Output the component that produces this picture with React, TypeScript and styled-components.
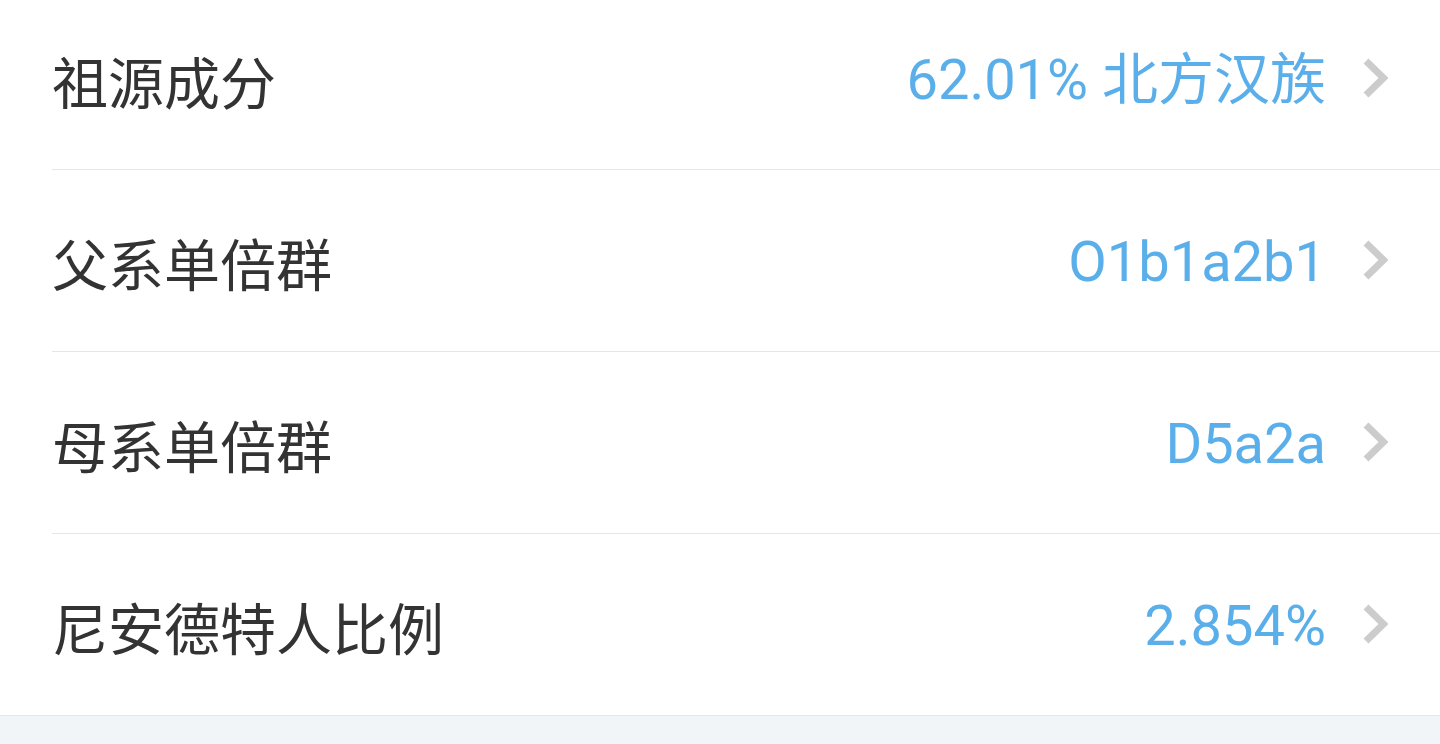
import React from "react";
import styled, { createGlobalStyle } from "styled-components";

const GlobalStyle = createGlobalStyle`
  html, body {
    margin: 0;
    padding: 0;
    background: #f2f5f8;
    overflow: hidden;
  }
  body {
    font-family: Roboto, "Noto Sans CJK SC", sans-serif;
  }
`;

const Card = styled.div`
  background: #ffffff;
  margin-top: -12px;
  border-bottom: 1px solid #e6e6e6;
`;

const Row = styled.div`
  display: flex;
  align-items: center;
  height: 182px;
  margin-left: 52px;
  padding-right: 52px;
  padding-top: 2px;
  box-sizing: border-box;
  border-bottom: 1px solid #e6e6e6;
  &:last-child {
    border-bottom: none;
    height: 181px;
  }
`;

const Label = styled.span`
  flex: 1;
  font-family: "Noto Sans CJK SC", sans-serif;
  font-size: 56px;
  color: #333333;
  line-height: 1;
`;

const Value = styled.span`
  font-family: Roboto, "Noto Sans CJK SC", sans-serif;
  font-size: 56px;
  color: #5aafea;
  line-height: 1;
`;

const Chevron = styled.svg`
  width: 26px;
  height: 42px;
  margin-left: 36px;
  flex-shrink: 0;
  margin-top: -4px;
`;

const rows = [
  { label: "祖源成分", value: "62.01% 北方汉族" },
  { label: "父系单倍群", value: "O1b1a2b1" },
  { label: "母系单倍群", value: "D5a2a" },
  { label: "尼安德特人比例", value: "2.854%" },
];

export default function App() {
  return (
    <>
      <GlobalStyle />
      <Card>
        {rows.map((r) => (
          <Row key={r.label}>
            <Label>{r.label}</Label>
            <Value>{r.value}</Value>
            <Chevron viewBox="0 0 26 42">
              <polyline
                points="4,4 21.5,21 4,38"
                fill="none"
                stroke="#cccccc"
                strokeWidth="7"
                strokeLinecap="butt"
                strokeLinejoin="miter"
              />
            </Chevron>
          </Row>
        ))}
      </Card>
    </>
  );
}
